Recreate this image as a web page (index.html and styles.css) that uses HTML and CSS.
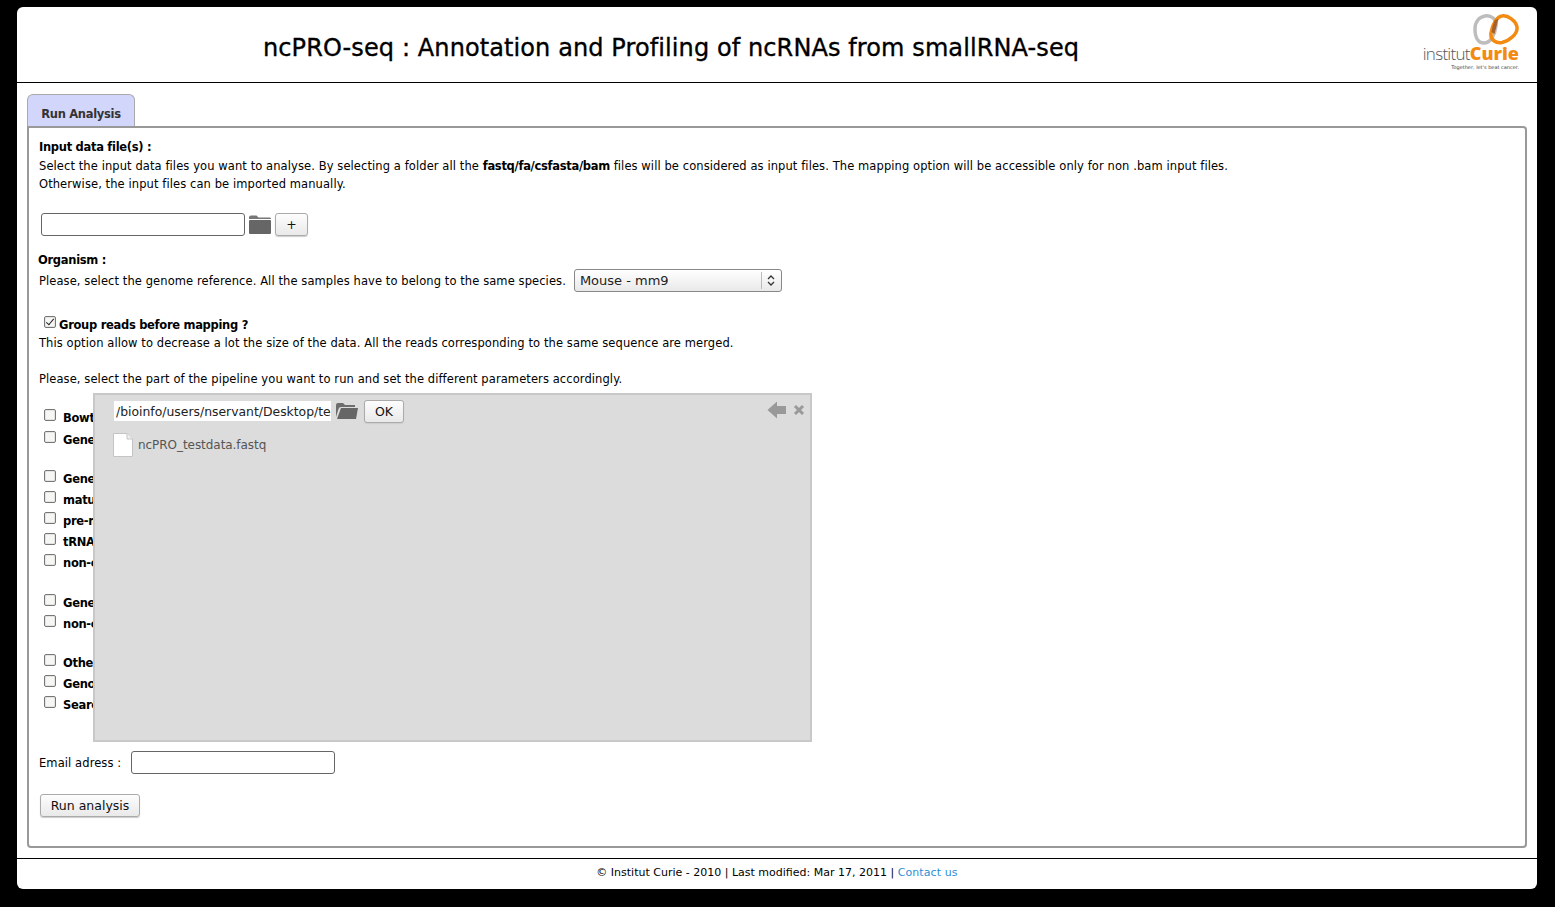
FILE: index.html
```html
<!DOCTYPE html>
<html lang="en">
<head>
<meta charset="utf-8">
<title>ncPRO-seq</title>
<link rel="stylesheet" href="styles.css">
</head>
<body>
<div class="page">
  <header class="header">
    <h1 class="title">ncPRO-seq : Annotation and Profiling of ncRNAs from smallRNA-seq</h1>
    <div class="logo">
      <svg class="rings" width="46" height="31" viewBox="0 0 46 31">
        <path d="M12 2C18 1 24 5 23 12C22 20 18 29 11 29C5 29 2 23 2 15C2 8 6 3 12 2Z" fill="none" stroke="#bdbdbd" stroke-width="3.500"/>
        <path d="M29 2C35 1 43 7 44 13C45 20 36 27 29 28.500C23 29.500 17 26 18 19C19 11 24 2.500 29 2Z" fill="none" stroke="#f38a12" stroke-width="3.500"/>
        <path d="M22 6C20 10 19 14 18.500 18L21.500 20C22.500 16 24 10 25.500 5Z" fill="#a8602a"/>
      </svg>
      <div class="logo-name"><span class="logo-inst">institut</span><span class="logo-curie">Curie</span></div>
      <div class="logo-tag">Together, let's beat cancer.</div>
    </div>
  </header>

  <main class="main">
    <div class="tab">Run Analysis</div>
    <div class="panel">
      <section class="input-sec">
        <div class="heading first">Input data file(s) :</div>
        <p class="line">Select the input data files you want to analyse. By selecting a folder all the <b class="strong">fastq/fa/csfasta/bam</b> files will be considered as input files. The mapping option will be accessible only for non .bam input files.</p>
        <p class="line">Otherwise, the input files can be imported manually.</p>
        <div class="file-row">
          <input class="text-input file-input" type="text">
          <svg class="folder" width="24" height="20" viewBox="0 0 24 20"><path d="M1 3.500Q1 1.500 3 1.500H8.500L10.500 3.500H22Q23 3.500 23 5H1Z" fill="#777"/><rect x="1" y="6" width="22" height="14" rx="1" fill="#666"/></svg>
          <button class="btn plus" type="button">+</button>
        </div>
      </section>

      <section class="org-sec">
        <div class="heading">Organism :</div>
        <div class="org-row">
          <span class="line">Please, select the genome reference. All the samples have to belong to the same species.</span>
          <div class="select-wrap">
            <select class="select"><option>Mouse - mm9</option></select>
            <svg class="select-arrows" width="20" height="21" viewBox="0 0 20 21"><path d="M0.500 2V19" stroke="#bbb"/><path d="M7 9L10 6L13 9M7 12L10 15L13 12" fill="none" stroke="#333" stroke-width="1.300"/></svg>
          </div>
        </div>
      </section>

      <section class="group-sec">
        <label class="group-label"><input class="check group-check" type="checkbox" checked><span class="group-text">Group reads before mapping ?</span></label>
        <p class="line">This option allow to decrease a lot the size of the data. All the reads corresponding to the same sequence are merged.</p>
        <p class="line pipeline-intro">Please, select the part of the pipeline you want to run and set the different parameters accordingly.</p>
      </section>

      <section class="options">
        <div class="opt-group">
          <label class="opt tall"><input class="check" type="checkbox"><span>Bowtie Mapping</span></label>
          <label class="opt"><input class="check" type="checkbox"><span>Generate</span></label>
        </div>
        <div class="opt-group wide">
          <label class="opt"><input class="check" type="checkbox"><span>Generate profiles</span></label>
          <label class="opt"><input class="check" type="checkbox"><span>mature miRNA</span></label>
          <label class="opt"><input class="check" type="checkbox"><span>pre-miRNA</span></label>
          <label class="opt"><input class="check" type="checkbox"><span>tRNA</span></label>
          <label class="opt"><input class="check" type="checkbox"><span>non-coding RNA</span></label>
        </div>
        <div class="opt-group">
          <label class="opt"><input class="check" type="checkbox"><span>Generate plots</span></label>
          <label class="opt"><input class="check" type="checkbox"><span>non-coding RNA</span></label>
        </div>
        <div class="opt-group">
          <label class="opt"><input class="check" type="checkbox"><span>Other analysis</span></label>
          <label class="opt"><input class="check" type="checkbox"><span>Genome tracks</span></label>
          <label class="opt"><input class="check" type="checkbox"><span>Search regions</span></label>
        </div>
      </section>

      <div class="email-row">
        <span class="line email-label">Email adress :</span>
        <input class="text-input email-input" type="text">
      </div>
      <button class="btn run" type="button">Run analysis</button>

      <div class="browser">
        <div class="browser-top">
          <input class="path" type="text" value="/bioinfo/users/nservant/Desktop/test">
          <svg class="folder-open" width="24" height="18" viewBox="0 0 24 18"><path d="M1 3Q1 1 3 1H8L10 3H20V5H6Q4 5 3.500 7L1 15Z" fill="#6d6d6d"/><path d="M6 6H23L21 17H2Z" fill="#666"/></svg>
          <button class="btn ok" type="button">OK</button>
          <div class="browser-tools">
            <svg width="20" height="18" viewBox="0 0 20 18"><path d="M0.500 9L10 0.500V5H19V13H10V17.500Z" fill="#999"/></svg>
            <svg width="12" height="12" viewBox="0 0 12 12"><path d="M2 2L10 10M10 2L2 10" stroke="#999" stroke-width="3"/></svg>
          </div>
        </div>
        <div class="file-item">
          <svg width="20" height="24" viewBox="0 0 20 24"><path d="M0.500 0.500H14L19.500 6V23.500H0.500Z" fill="#fff" stroke="#c4c4c4"/><path d="M14 0.500V6H19.500" fill="#eee" stroke="#c4c4c4"/></svg>
          <span>ncPRO_testdata.fastq</span>
        </div>
      </div>
    </div>
  </main>

  <footer class="footer">© Institut Curie - 2010 | Last modified: Mar 17, 2011 | <a class="contact" href="#">Contact us</a></footer>
</div>
</body>
</html>
```
FILE: styles.css
```css
* { box-sizing: border-box; }
html, body { margin: 0; height: 100%; }
body {
  background: #000;
  font-family: "DejaVu Sans", Verdana, sans-serif;
  font-size: 11px;
  color: #000;
  overflow: hidden;
}
.page {
  width: 1520px;
  height: 882px;
  margin: 7px 0 0 17px;
  background: #fff;
  border-radius: 6px;
  display: flex;
  flex-direction: column;
}
.header {
  height: 76px;
  flex: none;
  border-bottom: 1px solid #000;
  display: flex;
  align-items: flex-start;
  justify-content: space-between;
}
.title {
  margin: 25px 0 0 246px;
  font-size: 24px;
  line-height: 32px;
  font-weight: 400;
  letter-spacing: 0.1px;
  -webkit-text-stroke: 0.35px #000;
  color: #000;
  white-space: nowrap;
}
.logo {
  width: 96px;
  margin: 7px 18px 0 0;
  display: flex;
  flex-direction: column;
  align-items: flex-end;
  color: #777;
}
.rings { display: block; }
.logo-name { font-family: "Open Sans", sans-serif; line-height: 18px; font-size: 17px; margin-top: -1px; white-space: nowrap; }
.logo-inst { font-weight: 300; color: #555; letter-spacing: -0.7px; }
.logo-curie { font-weight: 800; color: #f38a12; font-size: 18px; }
.logo-tag { font-size: 5px; line-height: 7px; margin-top: 1px; color: #444; white-space: nowrap; }

.main {
  height: 776px;
  flex: none;
  padding: 11px 10px 0;
  border-bottom: 1px solid #000;
}
.tab {
  width: 108px;
  height: 33px;
  margin-bottom: -1px;
  position: relative;
  background: #d3d6fb;
  border: 1px solid #aaa;
  border-bottom: 0;
  border-radius: 6px 6px 0 0;
  color: #333;
  font-size: 11.500px;
  letter-spacing: -0.3px;
  font-weight: 700;
  text-align: center;
  padding-top: 12px;
  line-height: 15px;
}
.panel {
  position: relative;
  height: 722px;
  border: 2px solid #999;
  border-radius: 0 4px 4px 4px;
  padding: 10px 10px 0;
}
.heading { font-weight: 700; line-height: 18px; font-size: 11.500px; letter-spacing: -0.3px; }
.heading.first { height: 19px; }
.line { margin: 0; line-height: 18px; font-size: 11.500px; letter-spacing: 0.09px; }
.strong { letter-spacing: -0.3px; }
.input-sec { height: 113px; }
.file-row { display: flex; align-items: center; margin: 19px 0 0 2px; height: 24px; }
.text-input {
  border: 1px solid #666;
  border-radius: 3px;
  background: #fff;
  padding: 0 3px;
  height: 23px;
}
.file-input { width: 204px; }
.folder { margin: 0 3px; }
.btn {
  font-family: "DejaVu Sans", sans-serif;
  font-size: 12.500px;
  color: #111;
  border: 1px solid #aaa;
  border-radius: 3px;
  background: linear-gradient(#fdfdfd, #e9e9e9);
  padding: 0;
  box-shadow: 0 1px 1px #ccc;
}
.plus { width: 33px; height: 23px; }
.org-sec { height: 65px; margin-left: -1px; }
.org-row { display: flex; align-items: center; margin-left: 1px; height: 24px; }
.select-wrap { position: relative; margin: -2px 0 0 8px; width: 208px; height: 23px; }
.select {
  appearance: none;
  width: 100%;
  height: 100%;
  font-family: "DejaVu Sans", sans-serif;
  font-size: 13px;
  color: #222;
  border: 1px solid #888;
  border-radius: 3px;
  background: linear-gradient(#fff, #e9e9e9);
  padding: 0 5px;
}
.select-arrows { position: absolute; right: 1px; top: 1px; pointer-events: none; }
.group-sec { height: 75px; }
.group-label { display: flex; align-items: center; height: 18px; margin-left: 5px; font-weight: 700; font-size: 11.500px; letter-spacing: -0.3px; }
.group-text { margin: -1px 0 0 3px; }
.group-check { align-self: flex-start; margin-top: 0; }
.pipeline-intro { margin-top: 18px; }
.check {
  appearance: none;
  width: 12px;
  height: 12px;
  margin: 0;
  flex: none;
  border: 1px solid #777;
  border-radius: 2px;
  background: #f6f6f4;
  box-shadow: inset 0 0 0 1px #e4e4e0;
  position: relative;
}
.check:checked::after {
  content: "";
  position: absolute;
  left: 3px;
  top: 0;
  width: 3px;
  height: 7px;
  border: solid #222;
  border-width: 0 1.500px 1.500px 0;
  transform: rotate(40deg);
}
.options { height: 360px; padding-top: 13px; margin-left: 5px; }
.opt-group { margin-bottom: 18px; }
.opt-group.wide { margin-bottom: 19px; }
.opt {
  display: flex;
  align-items: center;
  height: 21px;
  font-weight: 700;
  font-size: 11.500px;
  letter-spacing: -0.3px;
}
.opt.tall { height: 22px; }
.opt span { margin-left: 7px; margin-top: 7px; }
.opt.tall span { margin-top: 5px; }
.email-row { display: flex; align-items: center; height: 24px; margin-top: -1px; }
.email-label { margin-top: 1px; }
.email-input { width: 204px; margin-left: 10px; }
.run { display: block; width: 100px; height: 23px; margin: 20px 0 0 1px; }

.browser {
  position: absolute;
  left: 64px;
  top: 265px;
  width: 719px;
  height: 349px;
  background: #dcdcdc;
  border: 2px solid #c8c8c8;
  padding: 4px 0 0 19px;
  color: #555;
  font-size: 12px;
  letter-spacing: -0.05px;
}
.browser-top { display: flex; align-items: center; height: 24px; }
.path {
  width: 217px;
  height: 20px;
  border: 0;
  background: #fff;
  font-family: "DejaVu Sans", sans-serif;
  font-size: 12.400px;
  color: #222;
  padding: 0 0 0 2px;
}
.folder-open { margin: 0 5px 0 4px; }
.ok { width: 40px; height: 23px; }
.browser-tools {
  position: absolute;
  right: 5px;
  top: 6px;
  display: flex;
  align-items: center;
  gap: 6px;
}
.file-item { display: flex; align-items: center; gap: 5px; margin: 10px 0 0 -1px; }
.footer {
  flex: 1;
  text-align: center;
  line-height: 26px;
  padding-top: 1px;
  color: #000;
}
.contact { color: #2c8fd6; text-decoration: none; letter-spacing: 0.1px; }
```
